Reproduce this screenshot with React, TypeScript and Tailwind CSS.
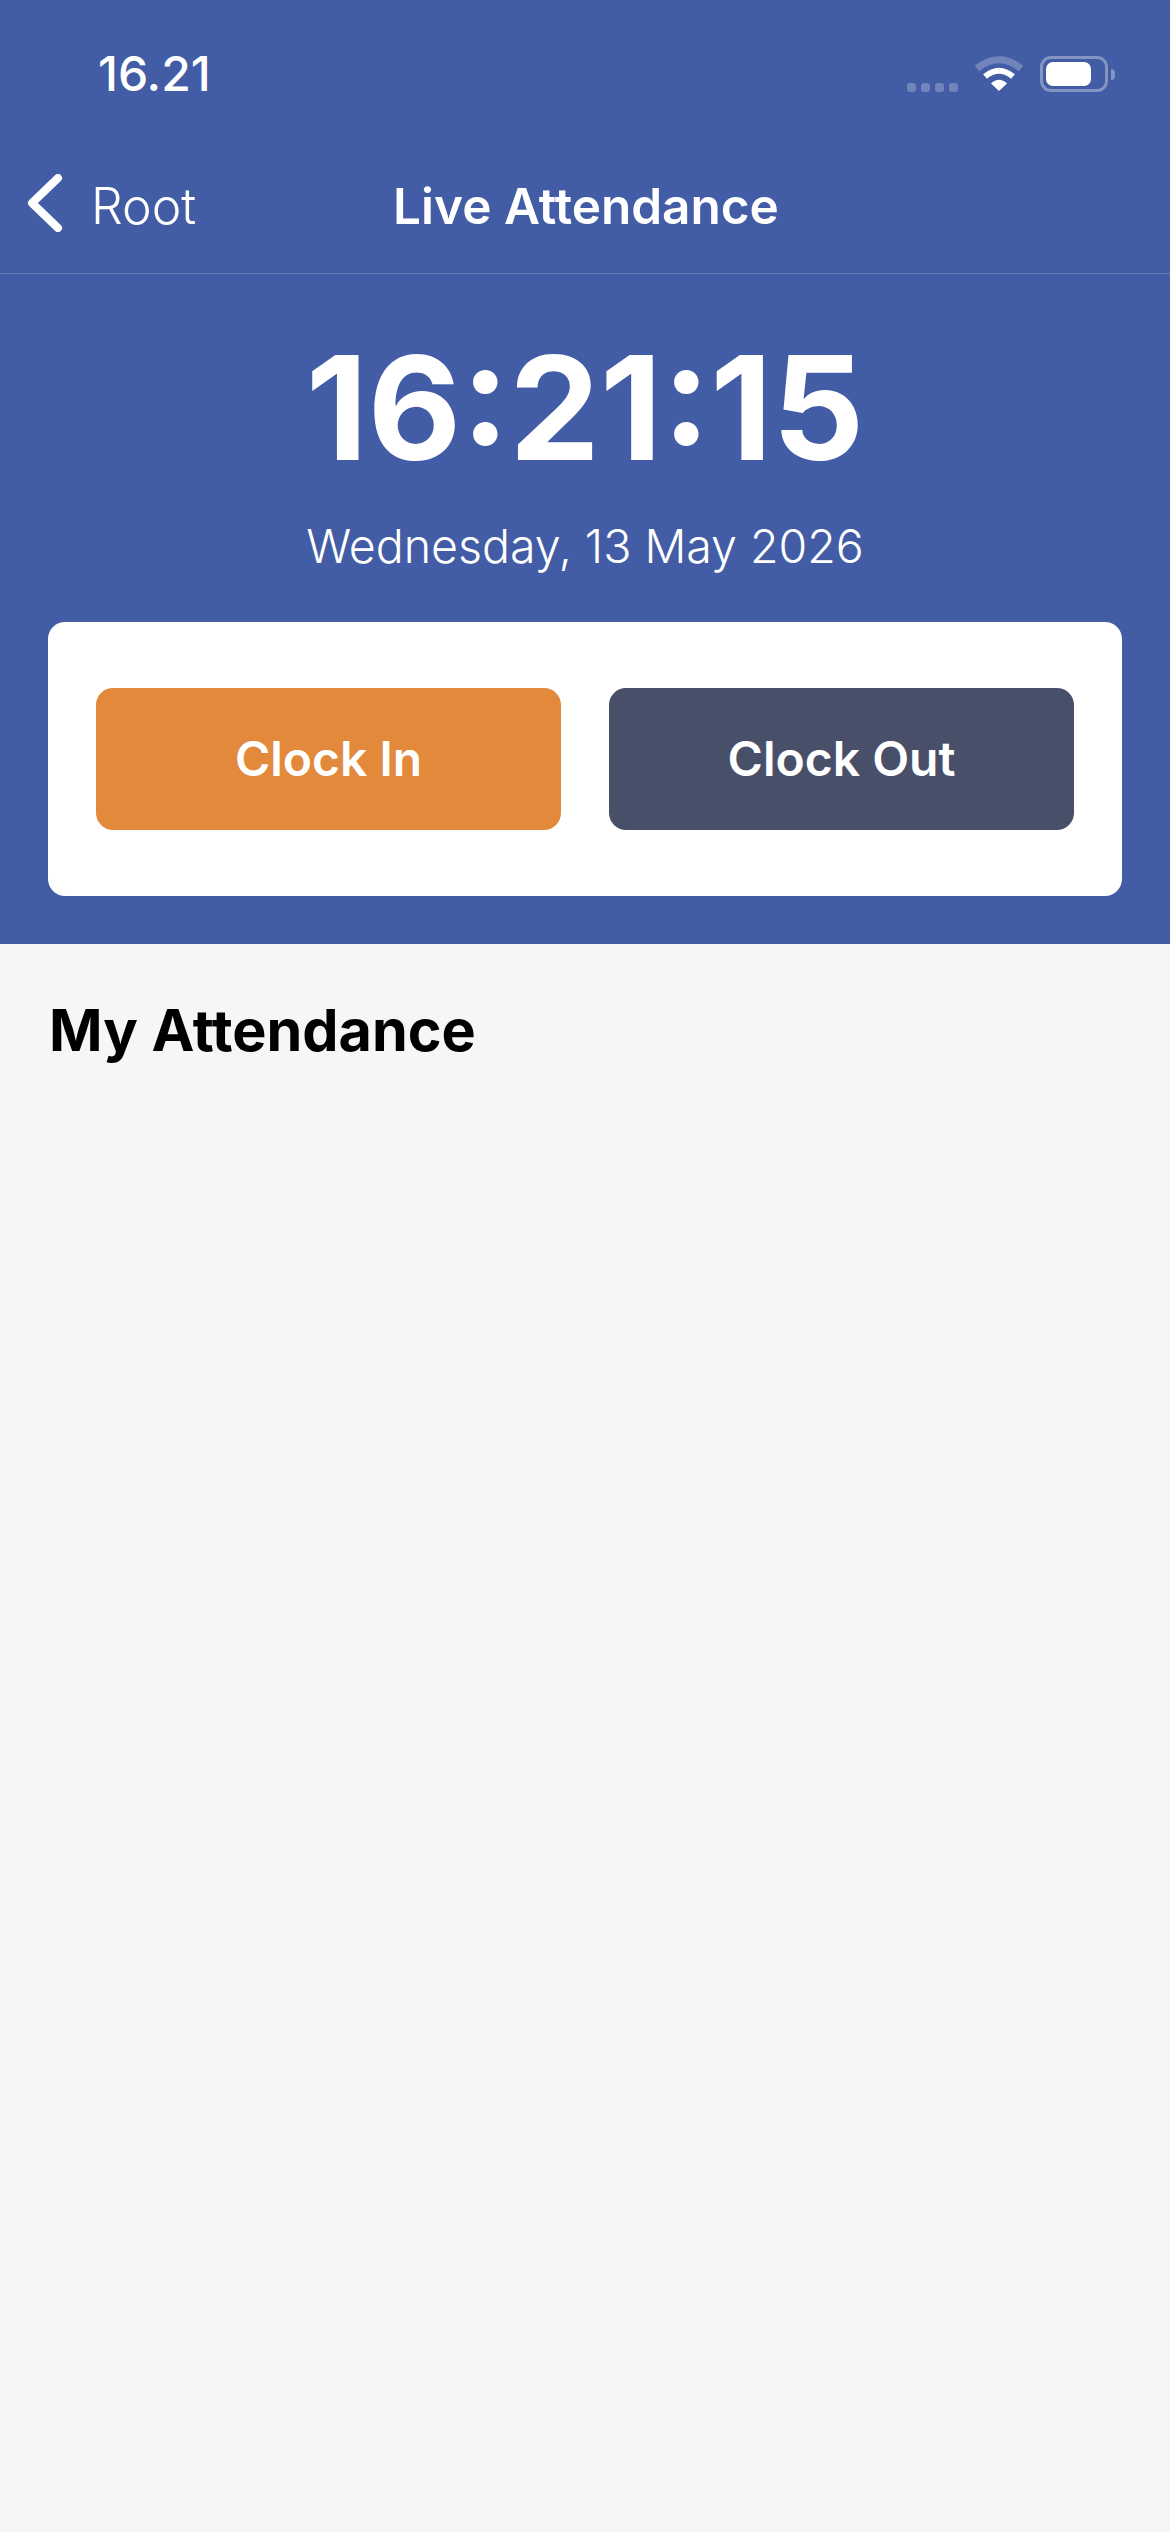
export default function App() {
  return (
    <div className="min-h-[2532px] bg-[#f6f6f6] font-['Inter',sans-serif]">
      <div className="bg-[#425da5] text-white pb-12">
        {/* status bar */}
        <div className="h-[132px] flex items-start justify-between pl-[98px] pr-[55px]">
          <span className="mt-[47px] text-[48px] leading-[54px] font-medium">16.21</span>
          <div className="mt-[56px] flex items-center">
            <div className="flex gap-[5px] mt-[26px] mr-[17px]">
              <div className="w-[9px] h-[9px] rounded-[3px] bg-white/25" />
              <div className="w-[9px] h-[9px] rounded-[3px] bg-white/25" />
              <div className="w-[9px] h-[9px] rounded-[3px] bg-white/25" />
              <div className="w-[9px] h-[9px] rounded-[3px] bg-white/25" />
            </div>
            <svg width="48" height="36" viewBox="0 0 48 36" fill="none" className="mr-[17px]">
              <path d="M2 12.5 Q24 -5 46 12.5" stroke="white" strokeOpacity="0.25" strokeWidth="7" />
              <path d="M10 20.5 Q24 9 38 20.5" stroke="white" strokeWidth="6" />
              <path d="M16 27.5 Q24 20 32 27.5 L24 35 Z" fill="white" />
            </svg>
            <div className="w-[68px] h-[36px] rounded-[11px] border-[3px] border-white/35 p-[3px]">
              <div className="w-[45px] h-full rounded-[7px] bg-white" />
            </div>
            <div className="ml-[3px] w-[4px] h-[11px] rounded-r-full bg-white/35" />
          </div>
        </div>

        {/* nav bar */}
        <div className="relative h-[142px] pt-[6px] border-b border-white/20 flex items-center justify-center">
          <div className="absolute left-[27px] top-[6px] bottom-0 flex items-center">
            <svg width="36" height="58" viewBox="0 0 36 58" fill="none" className="-mt-[6px]">
              <path d="M31 4 L5 29 L31 54" stroke="white" strokeWidth="8" strokeLinecap="round" strokeLinejoin="round" />
            </svg>
            <span className="ml-[28px] text-[50px] leading-[60px] font-light">Root</span>
          </div>
          <span className="ml-[2px] text-[49.5px] leading-[60px] font-semibold">Live Attendance</span>
        </div>

        {/* clock */}
        <div className="mt-[47px] text-center text-[144px] leading-[174px] font-bold">16:21:15</div>
        <div className="mt-[22px] text-center text-[46.5px] leading-[58px] font-light">Wednesday, 13 May 2026</div>

        {/* actions */}
        <div className="mx-[48px] mt-[47px] h-[274px] rounded-[17px] bg-white px-[48px] flex items-center gap-[48px]">
          <button className="flex-1 h-[142px] rounded-[17px] bg-[#e2893b] text-white text-[48px] font-semibold">Clock In</button>
          <button className="flex-1 h-[142px] rounded-[17px] bg-[#485069] text-white text-[48px] font-semibold">Clock Out</button>
        </div>
      </div>

      <h2 className="pl-[49px] pt-[51px] text-[57.5px] leading-[70px] font-bold text-black">My Attendance</h2>
    </div>
  );
}
